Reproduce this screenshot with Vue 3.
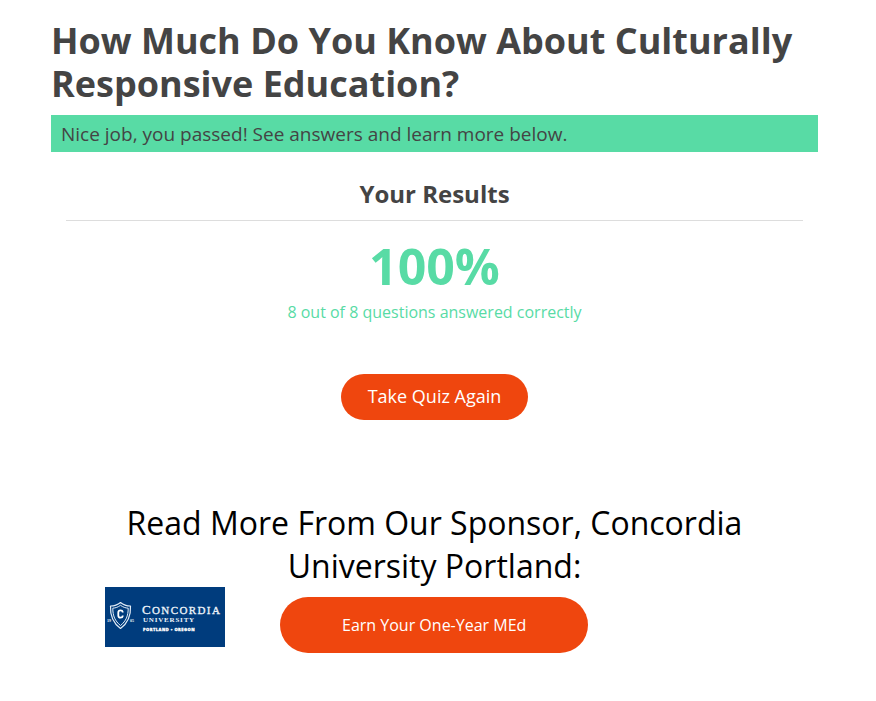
<script setup>
import { computed, ref } from 'vue'

const correct = ref(8)
const total = ref(8)
const score = computed(() => Math.round((correct.value / total.value) * 100))
</script>

<template>
  <main class="quiz">
    <h1 class="title">How Much Do You Know About Culturally Responsive Education?</h1>
    <p class="banner">Nice job, you passed! See answers and learn more below.</p>

    <section class="results">
      <h2 class="results-title">Your Results</h2>
      <p class="score">{{ score }}%</p>
      <p class="summary">{{ correct }} out of {{ total }} questions answered correctly</p>
      <button class="pill again" type="button">Take Quiz Again</button>
    </section>

    <section class="sponsor">
      <h2 class="sponsor-title">Read More From Our Sponsor, Concordia University Portland:</h2>
      <div class="sponsor-row">
        <a class="logo" href="#" aria-label="Concordia University Portland Oregon">
          <svg viewBox="0 0 120 60" width="120" height="60" aria-hidden="true">
            <rect width="120" height="60" fill="#003c7d" />
            <g fill="none" stroke="#e3edf7" stroke-linejoin="round">
              <path d="M15.500 15.500 C12.500 18 8.500 19 5.500 19 C5 29 8 36 15.500 41.500 C23 36 26 29 25.500 19 C22.500 19 18.500 18 15.500 15.500 Z" stroke-width="1.200" />
              <path d="M15.500 18.300 C13 20.200 10.500 21 7.800 21.200 C7.800 29 10 34 15.500 38.500 C21 34 23.200 29 23.200 21.200 C20.500 21 18 20.200 15.500 18.300 Z" stroke-width="1" />
            </g>
            <path d="M17.700 25.500 V24.800 Q17.500 23.300 15.500 23.300 Q13.300 23.300 13.300 25.500 V28.500 Q13.300 30.700 15.500 30.700 Q17.500 30.700 17.700 29.200 V28.500" fill="none" stroke="#fff" stroke-width="1.800" />
            <g fill="#eef4fa" font-family="'Liberation Serif', serif">
              <text x="2" y="34.500" font-size="4" font-weight="700">19</text>
              <text x="25" y="34.500" font-size="4" font-weight="700">05</text>
              <g stroke="#eef4fa" stroke-width="0.300">
                <text x="37" y="27" font-size="13">C</text>
                <text x="47" y="27" font-size="11" letter-spacing="1.400">ONCORDIA</text>
              </g>
              <text x="38" y="35" font-size="7" font-weight="700" letter-spacing="0.800">UNIVERSITY</text>
            </g>
            <text x="38" y="44" fill="#fff" font-family="'Open Sans', sans-serif" font-size="4" font-weight="800" stroke="#fff" stroke-width="0.300" letter-spacing="0.500">PORTLAND • OREGON</text>
          </svg>
        </a>
        <a class="pill earn" href="#">Earn Your One-Year MEd</a>
      </div>
    </section>
  </main>
</template>

<style>
body {
  margin: 0;
  background: #fff;
}
</style>

<style scoped>
.quiz {
  padding: 19px 58px 48px 51px;
  font-family: 'Open Sans', sans-serif;
  color: #444;
}

h1,
h2,
p {
  margin: 0;
}

.title {
  font-size: 36px;
  line-height: 43px;
  font-weight: 700;
}

.banner {
  margin-top: 10px;
  padding: 6px 10px 4px;
  background: #58dba5;
  font-size: 19px;
  line-height: 27px;
}

.results {
  display: flex;
  flex-direction: column;
  align-items: center;
  padding: 24px 15px 0;
}

.results-title {
  align-self: stretch;
  padding-bottom: 8px;
  border-bottom: 1px solid #ddd;
  font-size: 24px;
  line-height: 36px;
  font-weight: 700;
  text-align: center;
}

.score {
  margin-top: 15px;
  color: #58dba5;
  font-size: 50px;
  line-height: 60px;
  font-weight: 700;
}

.summary {
  margin-top: 4px;
  color: #58dba5;
  font-size: 16px;
  line-height: 24px;
}

.pill {
  border: 0;
  background: #ef460e;
  color: #fff;
  font-family: inherit;
  text-align: center;
  text-decoration: none;
  cursor: pointer;
}

.again {
  margin-top: 50px;
  padding: 9px 27px 11px;
  border-radius: 23px;
  font-size: 18px;
  line-height: 26px;
}

.sponsor {
  margin-top: 81px;
}

.sponsor-title {
  padding: 0 54px;
  color: #000;
  font-size: 32px;
  line-height: 43px;
  font-weight: 400;
  text-align: center;
}

.sponsor-row {
  display: flex;
  align-items: flex-start;
  gap: 55px;
  padding-left: 54px;
}

.logo svg {
  display: block;
}

.earn {
  margin-top: 10px;
  padding: 16px 62px;
  border-radius: 28px;
  font-size: 16px;
  line-height: 24px;
}
</style>
